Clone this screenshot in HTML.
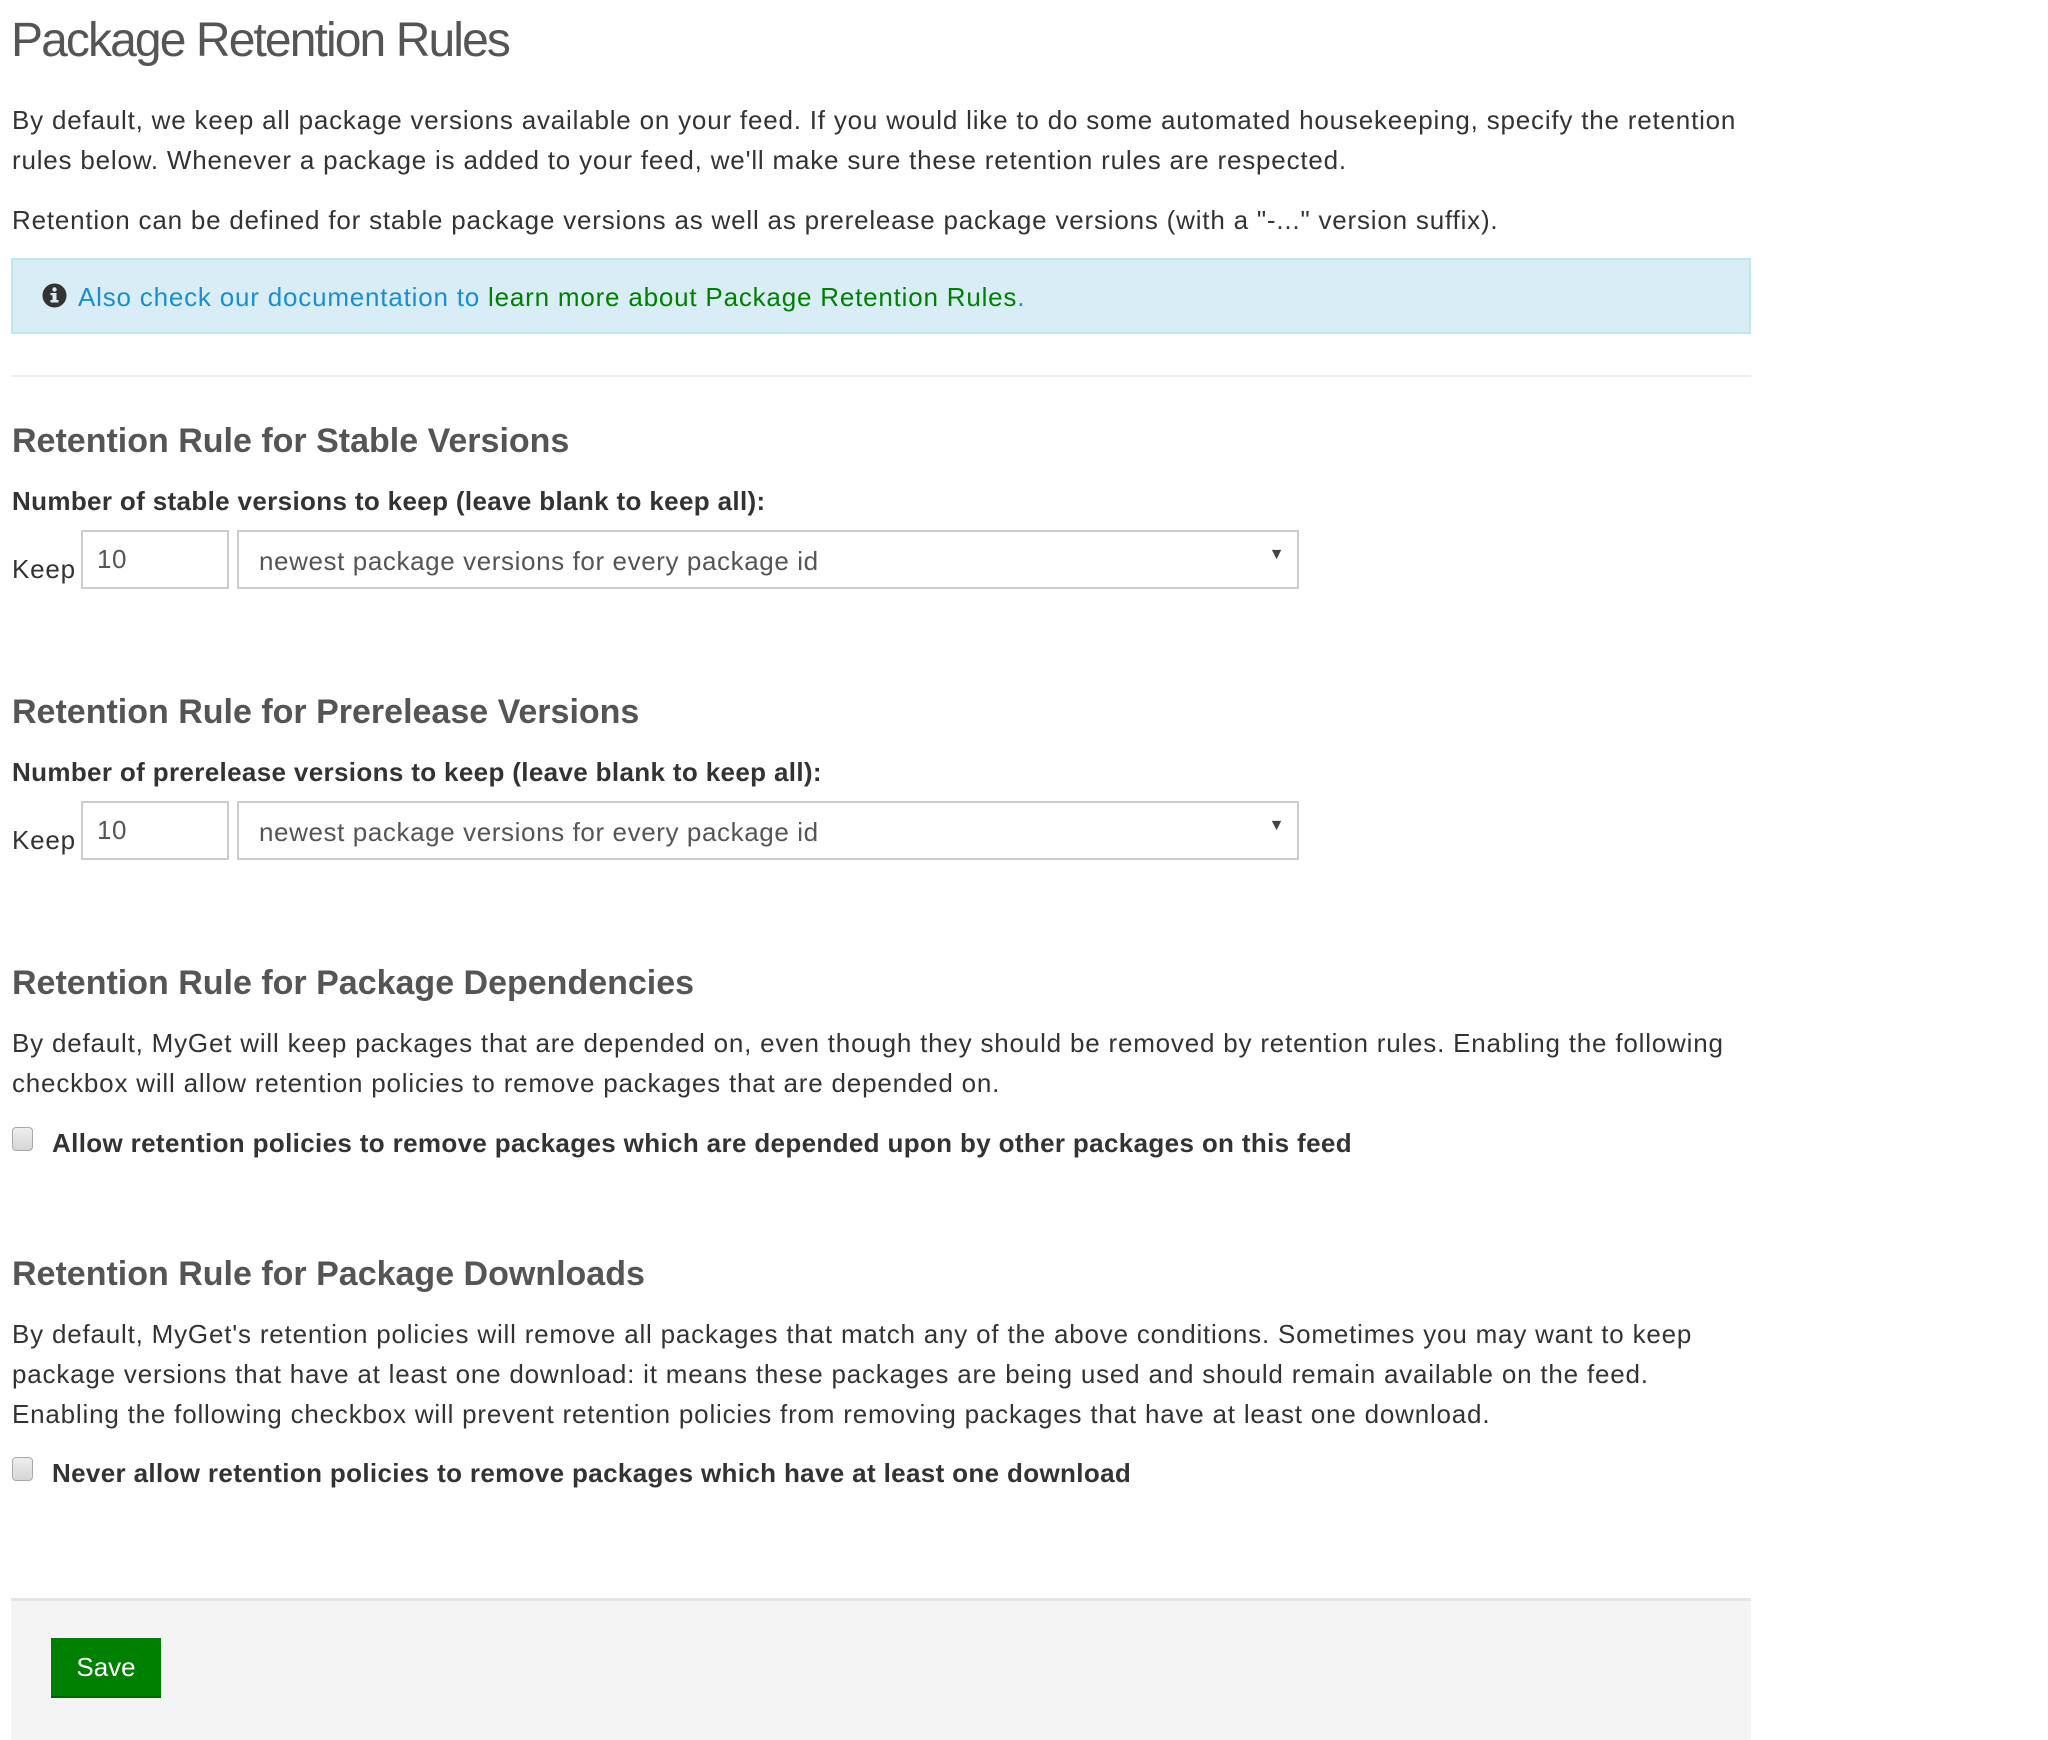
<!DOCTYPE html>
<html><head><meta charset="utf-8"><style>
html,body{margin:0;padding:0;width:2048px;height:1740px;overflow:hidden;background:#fff;}
body{font-family:"Liberation Sans",sans-serif;color:#333;position:relative;}
.a{position:absolute;white-space:nowrap;}
.t{font-size:26px;line-height:40px;letter-spacing:0.8px;}
.h1{font-size:48px;line-height:60px;color:#555;letter-spacing:-1.9px;}
.h3{font-size:34px;line-height:40px;color:#555;font-weight:bold;letter-spacing:0px;}
.b{font-weight:bold;letter-spacing:0.35px;}
.inp{position:absolute;border:2px solid #ccc;background:#fff;box-sizing:border-box;font-size:26px;color:#555;letter-spacing:0.6px;}
.cb{position:absolute;width:21px;height:24px;border:1px solid #aaa;border-radius:4px;background:linear-gradient(#eee,#d6d6d6);box-sizing:border-box;}
</style></head><body>
<div class="a h1" style="left:11px;top:11px;">Package Retention Rules</div>
<div class="a t" style="left:12px;top:100px;">By default, we keep all package versions available on your feed. If you would like to do some automated housekeeping, specify the retention</div>
<div class="a t" style="left:12px;top:140px;">rules below. Whenever a package is added to your feed, we'll make sure these retention rules are respected.</div>
<div class="a t" style="left:12px;top:200px;">Retention can be defined for stable package versions as well as prerelease package versions (with a "-..." version suffix).</div>

<div style="position:absolute;left:11px;top:258px;width:1740px;height:76px;background:#d9edf7;border:2px solid #bce8f1;box-sizing:border-box;"></div>
<svg class="a" style="left:42px;top:283px" width="25" height="25" viewBox="0 0 25 25"><circle cx="12.5" cy="12.5" r="12" fill="#333"/><rect x="10.5" y="10" width="4" height="9" fill="#d9edf7"/><rect x="8.5" y="17" width="8" height="2.5" fill="#d9edf7"/><rect x="8.5" y="10" width="4" height="2.2" fill="#d9edf7"/><circle cx="12.5" cy="6.5" r="2.2" fill="#d9edf7"/></svg>
<div class="a t" style="left:78px;top:277px;color:#1a8fd0;">Also check our documentation to <span style="color:#008000">learn more about Package Retention Rules</span>.</div>

<div style="position:absolute;left:11px;top:375px;width:1740px;height:2px;background:#eee;"></div>

<div class="a h3" style="left:12px;top:421px;">Retention Rule for Stable Versions</div>
<div class="a t b" style="left:12px;top:481px;">Number of stable versions to keep (leave blank to keep all):</div>
<div class="a t" style="left:12px;top:549px;">Keep</div>
<div class="inp" style="left:81px;top:530px;width:148px;height:59px;"><span style="position:absolute;left:14px;top:12px;">10</span></div>
<div class="inp" style="left:237px;top:530px;width:1062px;height:59px;"><span style="position:absolute;left:20px;top:14px;">newest package versions for every package id</span><span style="position:absolute;right:12px;top:14px;font-size:16px;color:#444;">&#9660;</span></div>

<div class="a h3" style="left:12px;top:692px;">Retention Rule for Prerelease Versions</div>
<div class="a t b" style="left:12px;top:752px;">Number of prerelease versions to keep (leave blank to keep all):</div>
<div class="a t" style="left:12px;top:820px;">Keep</div>
<div class="inp" style="left:81px;top:801px;width:148px;height:59px;"><span style="position:absolute;left:14px;top:12px;">10</span></div>
<div class="inp" style="left:237px;top:801px;width:1062px;height:59px;"><span style="position:absolute;left:20px;top:14px;">newest package versions for every package id</span><span style="position:absolute;right:12px;top:14px;font-size:16px;color:#444;">&#9660;</span></div>

<div class="a h3" style="left:12px;top:963px;">Retention Rule for Package Dependencies</div>
<div class="a t" style="left:12px;top:1023px;">By default, MyGet will keep packages that are depended on, even though they should be removed by retention rules. Enabling the following</div>
<div class="a t" style="left:12px;top:1063px;">checkbox will allow retention policies to remove packages that are depended on.</div>
<div class="cb" style="left:12px;top:1127px;"></div>
<div class="a t b" style="left:52px;top:1123px;">Allow retention policies to remove packages which are depended upon by other packages on this feed</div>

<div class="a h3" style="left:12px;top:1254px;">Retention Rule for Package Downloads</div>
<div class="a t" style="left:12px;top:1314px;">By default, MyGet's retention policies will remove all packages that match any of the above conditions. Sometimes you may want to keep</div>
<div class="a t" style="left:12px;top:1354px;">package versions that have at least one download: it means these packages are being used and should remain available on the feed.</div>
<div class="a t" style="left:12px;top:1394px;">Enabling the following checkbox will prevent retention policies from removing packages that have at least one download.</div>
<div class="cb" style="left:12px;top:1457px;"></div>
<div class="a t b" style="left:52px;top:1453px;">Never allow retention policies to remove packages which have at least one download</div>

<div style="position:absolute;left:11px;top:1598px;width:1740px;height:142px;background:#f4f4f4;border-top:3px solid #e5e5e5;"></div>
<div style="position:absolute;left:51px;top:1638px;width:110px;height:60px;background:#008000;border-bottom:2px solid #006400;box-sizing:border-box;color:#fff;font-size:26px;line-height:58px;text-align:center;">Save</div>
</body></html>
